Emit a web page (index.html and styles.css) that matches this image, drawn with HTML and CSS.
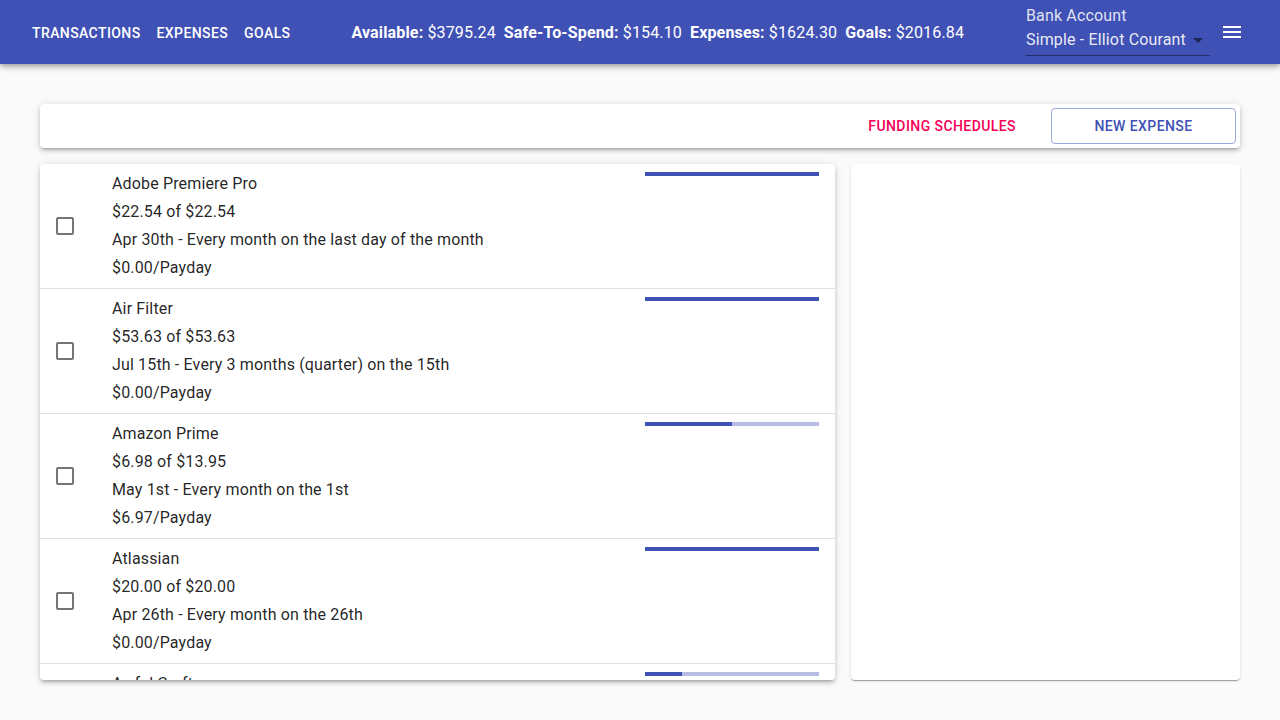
FILE: index.html
```html
<!DOCTYPE html>
<html>
<head>
<meta charset="utf-8">
<link rel="stylesheet" href="styles.css">
</head>
<body>
<header class="appbar">
  <nav class="nav">
    <a class="nav-btn">Transactions</a>
    <a class="nav-btn">Expenses</a>
    <a class="nav-btn">Goals</a>
  </nav>
  <div class="stats">
    <span class="stat"><b>Available:</b> $3795.24</span>
    <span class="stat"><b>Safe-To-Spend:</b> $154.10</span>
    <span class="stat"><b>Expenses:</b> $1624.30</span>
    <span class="stat"><b>Goals:</b> $2016.84</span>
  </div>
  <div class="bank">
    <div class="bank-label">Bank Account</div>
    <div class="bank-select">
      <span class="bank-value">Simple - Elliot Courant</span>
      <svg class="caret" width="24" height="24" viewBox="0 0 24 24"><path d="M7 10l5 5 5-5z" fill="rgba(0,0,0,0.54)"/></svg>
    </div>
  </div>
  <button class="menu-btn" aria-label="menu">
    <svg width="24" height="24" viewBox="0 0 24 24"><path d="M3 18h18v-2H3v2zm0-5h18v-2H3v2zm0-7v2h18V6H3z" fill="#fff"/></svg>
  </button>
</header>

<main class="main">
  <div class="toolbar card">
    <button class="text-btn">Funding Schedules</button>
    <button class="outline-btn">New Expense</button>
  </div>
  <div class="content">
    <div class="card list">
      <div class="item">
        <span class="checkbox"></span>
        <div class="lines">
          <div>Adobe Premiere Pro</div>
          <div>$22.54 of $22.54</div>
          <div>Apr 30th - Every month on the last day of the month</div>
          <div>$0.00/Payday</div>
        </div>
        <div class="progress"><div class="bar" style="width:100%"></div></div>
      </div>
      <div class="item">
        <span class="checkbox"></span>
        <div class="lines">
          <div>Air Filter</div>
          <div>$53.63 of $53.63</div>
          <div>Jul 15th - Every 3 months (quarter) on the 15th</div>
          <div>$0.00/Payday</div>
        </div>
        <div class="progress"><div class="bar" style="width:100%"></div></div>
      </div>
      <div class="item">
        <span class="checkbox"></span>
        <div class="lines">
          <div>Amazon Prime</div>
          <div>$6.98 of $13.95</div>
          <div>May 1st - Every month on the 1st</div>
          <div>$6.97/Payday</div>
        </div>
        <div class="progress"><div class="bar" style="width:50%"></div></div>
      </div>
      <div class="item">
        <span class="checkbox"></span>
        <div class="lines">
          <div>Atlassian</div>
          <div>$20.00 of $20.00</div>
          <div>Apr 26th - Every month on the 26th</div>
          <div>$0.00/Payday</div>
        </div>
        <div class="progress"><div class="bar" style="width:100%"></div></div>
      </div>
      <div class="item">
        <span class="checkbox"></span>
        <div class="lines">
          <div>Awful Craft</div>
          <div>$4.20 of $20.00</div>
          <div>May 5th - Every month on the 5th</div>
          <div>$7.90/Payday</div>
        </div>
        <div class="progress"><div class="bar" style="width:21%"></div></div>
      </div>
    </div>
    <div class="card side"></div>
  </div>
</main>
</body>
</html>
```

FILE: styles.css
```css
* { box-sizing: border-box; }
html, body { margin: 0; padding: 0; height: 100%; }
body {
  font-family: Roboto, "Liberation Sans", sans-serif;
  background: #fafafa;
  color: rgba(0,0,0,0.87);
  overflow: hidden;
}
.appbar {
  height: 64px;
  background: #3f51b5;
  color: #fff;
  display: flex;
  align-items: center;
  padding: 0 36px 0 24px;
  box-shadow: 0 2px 4px -1px rgba(0,0,0,0.2), 0 4px 5px 0 rgba(0,0,0,0.14), 0 1px 10px 0 rgba(0,0,0,0.12);
  position: relative;
  z-index: 2;
}
.nav { display: flex; margin-top: 3px; }
.nav-btn {
  font-size: 14px;
  font-weight: 500;
  text-transform: uppercase;
  letter-spacing: 0.02857em;
  padding: 6px 8px;
  line-height: 1.75;
  color: #fff;
  cursor: pointer;
}
.stats {
  display: flex;
  gap: 8px;
  margin-left: 53px;
  font-size: 16px;
  letter-spacing: 0.00938em;
}
.stat b { font-weight: 700; }
.bank {
  margin-left: auto;
  width: 184px;
  display: flex;
  flex-direction: column;
  margin-top: -4px;
  letter-spacing: 0.00938em;
}
.bank-label {
  font-size: 16px;
  color: rgba(255,255,255,0.85);
  line-height: 22px;
  white-space: nowrap;
}
.bank-select {
  display: flex;
  align-items: center;
  font-size: 16px;
  color: rgba(255,255,255,0.9);
  border-bottom: 1px solid rgba(0,0,0,0.42);
  height: 29px;
  padding-bottom: 3px;
}
.bank-value { white-space: nowrap; flex: 1; }
.caret { flex: none; margin-left: -2px; margin-top: 2px; }
.menu-btn {
  background: none;
  border: 0;
  padding: 0;
  margin-left: 10px;
  width: 24px;
  height: 24px;
  display: flex;
  justify-content: center;
  flex: none;
}
.main {
  padding: 40px;
  height: calc(100% - 64px);
  display: flex;
  flex-direction: column;
  gap: 16px;
}
.card {
  background: #fff;
  border-radius: 4px;
  box-shadow: 0 2px 1px -1px rgba(0,0,0,0.2), 0 1px 1px 0 rgba(0,0,0,0.14), 0 1px 3px 0 rgba(0,0,0,0.12);
}
.toolbar {
  height: 44px;
  display: flex;
  justify-content: flex-end;
  align-items: center;
  padding: 0 4px;
  gap: 19px;
  box-shadow: 0 3px 3px -2px rgba(0,0,0,0.2), 0 3px 4px 0 rgba(0,0,0,0.14), 0 1px 8px 0 rgba(0,0,0,0.12);
}
.text-btn, .outline-btn {
  font-family: Roboto, "Liberation Sans", sans-serif;
  font-size: 14px;
  font-weight: 500;
  text-transform: uppercase;
  letter-spacing: 0.03em;
  background: none;
  border: 0;
  height: 36px;
  cursor: pointer;
}
.text-btn { color: #f50057; padding: 6px 16px; }
.outline-btn {
  color: #3f51b5;
  border: 1px solid rgba(63,81,181,0.5);
  border-radius: 4px;
  width: 185px;
}
.content {
  flex: 1;
  min-height: 0;
  display: flex;
  gap: 16px;
}
.list {
  width: 795px;
  overflow: hidden;
  box-shadow: 0 3px 3px -2px rgba(0,0,0,0.2), 0 3px 4px 0 rgba(0,0,0,0.14), 0 1px 8px 0 rgba(0,0,0,0.12);
}
.side { flex: 1; }
.item {
  display: flex;
  align-items: flex-start;
  height: 125px;
  border-bottom: 1px solid #e0e0e0;
  padding: 6px 16px 0 16px;
}
.checkbox {
  width: 18px;
  height: 18px;
  border: 2px solid rgba(0,0,0,0.54);
  border-radius: 2px;
  margin-top: 47px;
  flex: none;
}
.lines {
  margin-left: 38px;
  flex: 1;
  font-size: 16px;
  line-height: 28px;
  letter-spacing: 0.00938em;
}
.progress {
  width: 174px;
  height: 4px;
  margin-top: 2px;
  background: #b6bce2;
  flex: none;
}
.bar { height: 100%; background: #3f51b5; }
```
